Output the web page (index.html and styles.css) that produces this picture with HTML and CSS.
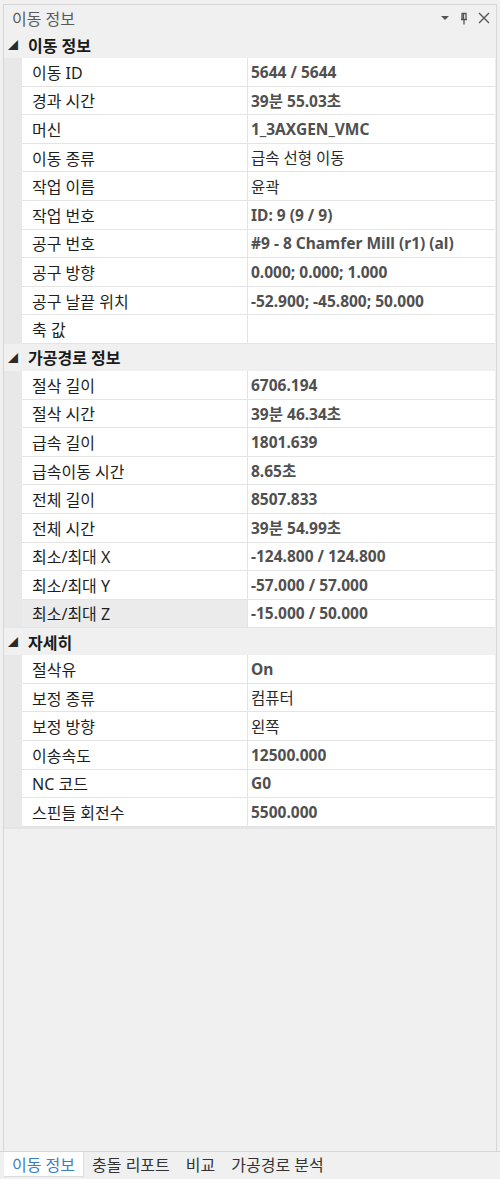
FILE: index.html
```html
<!DOCTYPE html>
<html lang="ko">
<head>
  <meta charset="UTF-8" />
  <title>이동 정보</title>
  <link rel="stylesheet" href="styles.css">
</head>
<body>
  <div class="panel">
    <div class="titlebar">
      <span class="title">이동 정보</span>
      <div class="tools">
        <svg width="10" height="6" viewBox="0 0 10 6"><path d="M1 1h8L5 5z" fill="#555"/></svg>
        <svg width="10" height="13" viewBox="0 0 10 13"><path d="M2.5 1.5h5M3 1.5v6M7 1.5v6M2 7.5h6M5 7.5v5M4.5 1.5v6" stroke="#555" stroke-width="1.3" fill="none"/></svg>
        <svg width="12" height="12" viewBox="0 0 12 12"><path d="M1 1l10 10M11 1L1 11" stroke="#555" stroke-width="1.4"/></svg>
      </div>
    </div>

    <div class="grid">
      <div class="cat"><span class="arrow">◢</span>이동 정보</div>
      <div class="row"><div class="name">이동 ID</div><div class="value b">5644 / 5644</div></div>
      <div class="row"><div class="name">경과 시간</div><div class="value b">39분 55.03초</div></div>
      <div class="row"><div class="name">머신</div><div class="value b">1_3AXGEN_VMC</div></div>
      <div class="row"><div class="name">이동 종류</div><div class="value">급속 선형 이동</div></div>
      <div class="row"><div class="name">작업 이름</div><div class="value">윤곽</div></div>
      <div class="row"><div class="name">작업 번호</div><div class="value b">ID: 9 (9 / 9)</div></div>
      <div class="row"><div class="name">공구 번호</div><div class="value b">#9 - 8 Chamfer Mill (r1) (al)</div></div>
      <div class="row"><div class="name">공구 방향</div><div class="value b">0.000; 0.000; 1.000</div></div>
      <div class="row"><div class="name">공구 날끝 위치</div><div class="value b">-52.900; -45.800; 50.000</div></div>
      <div class="row"><div class="name">축 값</div><div class="value"></div></div>

      <div class="cat"><span class="arrow">◢</span>가공경로 정보</div>
      <div class="row"><div class="name">절삭 길이</div><div class="value b">6706.194</div></div>
      <div class="row"><div class="name">절삭 시간</div><div class="value b">39분 46.34초</div></div>
      <div class="row"><div class="name">급속 길이</div><div class="value b">1801.639</div></div>
      <div class="row"><div class="name">급속이동 시간</div><div class="value b">8.65초</div></div>
      <div class="row"><div class="name">전체 길이</div><div class="value b">8507.833</div></div>
      <div class="row"><div class="name">전체 시간</div><div class="value b">39분 54.99초</div></div>
      <div class="row"><div class="name">최소/최대 X</div><div class="value b">-124.800 / 124.800</div></div>
      <div class="row"><div class="name">최소/최대 Y</div><div class="value b">-57.000 / 57.000</div></div>
      <div class="row selected"><div class="name">최소/최대 Z</div><div class="value b">-15.000 / 50.000</div></div>

      <div class="cat"><span class="arrow">◢</span>자세히</div>
      <div class="row"><div class="name">절삭유</div><div class="value b">On</div></div>
      <div class="row"><div class="name">보정 종류</div><div class="value">컴퓨터</div></div>
      <div class="row"><div class="name">보정 방향</div><div class="value">왼쪽</div></div>
      <div class="row"><div class="name">이송속도</div><div class="value b">12500.000</div></div>
      <div class="row"><div class="name">NC 코드</div><div class="value b">G0</div></div>
      <div class="row"><div class="name">스핀들 회전수</div><div class="value b">5500.000</div></div>
    </div>
  </div>

  <div class="tabs">
    <div class="tab active">이동 정보</div>
    <div class="tab">충돌 리포트</div>
    <div class="tab">비교</div>
    <div class="tab">가공경로 분석</div>
  </div>
</body>
</html>
```

FILE: styles.css
```css
body {
  margin: 0;
  height: 1179px;
  background: #f0f0f0;
  font-family: "Noto Sans", "Noto Sans CJK KR", sans-serif;
  font-size: 16px;
  color: #1e1e1e;
  display: flex;
  flex-direction: column;
  padding-top: 4px;
  box-sizing: border-box;
}
.panel {
  margin: 0 3px;
  border: 1px solid #d6d6d6;
  border-bottom: none;
  flex: 1;
  display: flex;
  flex-direction: column;
}
.titlebar {
  height: 26px;
  display: flex;
  align-items: center;
  justify-content: space-between;
  padding: 0 6px 0 8px;
}
.title {
  color: #5a5a5a;
}
.tools {
  display: flex;
  align-items: center;
  gap: 9px;
}
.grid {
  display: flex;
  flex-direction: column;
  border-bottom: 2px solid #e4e4e4;
  margin-right: 1px;
}
.cat {
  height: 27px;
  display: flex;
  align-items: center;
  font-weight: bold;
  color: #1a1a1a;
  background: #f0f0f0;
}
.arrow {
  width: 20px;
  padding-left: 4px;
  font-size: 10px;
  color: #2a2a2a;
  font-weight: normal;
}
.row {
  height: 28.6px;
  display: flex;
  padding-left: 18px;
  background: #e8e8e8;
  box-sizing: border-box;
}
.name, .value {
  display: flex;
  align-items: center;
  background: #fff;
  border-bottom: 1px solid #e4e4e4;
}
.name {
  width: 226px;
  padding-left: 10px;
  box-sizing: border-box;
  border-right: 1px solid #e4e4e4;
}
.value {
  flex: 1;
  padding-left: 3px;
  font-size: 15.5px;
  color: #2a2a2a;
}
.value.b {
  font-weight: bold;
  color: #505050;
}
.selected .name {
  background: #ebebeb;
}
.tabs {
  height: 28px;
  display: flex;
  border-top: 1px solid #d6d6d6;
  padding-left: 4px;
  box-sizing: border-box;
}
.tab {
  padding: 0 8px;
  height: 24px;
  display: flex;
  align-items: center;
  color: #333;
}
.tab.active {
  background: #fff;
  color: #3c7dc8;
  border-bottom: 1px solid #dcdcdc;
  border-right: 1px solid #dcdcdc;
}
```
